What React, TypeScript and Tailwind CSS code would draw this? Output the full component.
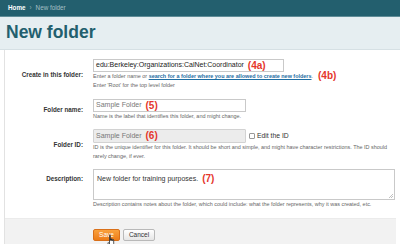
import React from "react";

const font = { fontFamily: '"Liberation Sans", Arial, sans-serif' };

// Red call-out marker, like the numbers drawn on the screenshot
function Mark({ children }: { children: React.ReactNode }) {
  return (
    <span className="ml-[4px] text-[10px] font-bold leading-none text-[#e5362c]">
      {children}
    </span>
  );
}

function Label({ children, top = false }: { children: React.ReactNode; top?: boolean }) {
  return (
    <div
      className={`w-[79px] shrink-0 pr-[1px] text-right text-[6.3px] font-bold text-[#333] ${
        top ? "pt-[5px]" : "flex items-center justify-end"
      }`}
    >
      {children}
    </div>
  );
}

function Help({ children }: { children: React.ReactNode }) {
  return (
    <div className="flex h-[9px] items-center text-[5.45px] leading-[9px] text-[#666] whitespace-nowrap">
      {children}
    </div>
  );
}

function HandCursor() {
  return (
    <svg
      className="absolute left-[101px] top-[15px]"
      width="12"
      height="14"
      viewBox="0 0 12 14"
    >
      <path
        d="M3.5 1.2c0-.6.9-.6.9 0v5.2h.2V5c0-.6.9-.6.9 0v1.5h.2V5.5c0-.6.9-.6.9 0v1.2h.2v-.7c0-.6.9-.6.9 0v3.8c0 1.3-.6 2.2-1 2.9H4.3c-.5-.8-1.7-2.3-2.4-3.3-.4-.6.3-1.1.7-.6l.9 1z"
        fill="#fff"
        stroke="#111"
        strokeWidth="0.7"
        strokeLinejoin="round"
      />
    </svg>
  );
}

export default function App() {
  return (
    <div className="h-[244px] w-[400px] overflow-hidden bg-white" style={font}>
      {/* Breadcrumb bar */}
      <div className="flex h-[17px] items-center gap-[4px] border-b border-[#5f8c97] bg-[#235f6e] pl-[8px] text-[6.3px]">
        <span className="font-bold text-white">Home</span>
        <span className="text-[#8fb0b8]">›</span>
        <span className="text-[#a7c0c6]">New folder</span>
      </div>

      {/* Title band */}
      <div className="h-[33px] border-b border-[#d6e0e4] bg-[#e6eef1] pl-[6px] pt-[6px]">
        <h1 className="text-[17.5px] font-bold leading-[18px] text-[#235f6e]">New folder</h1>
      </div>

      {/* Form panel */}
      <div className="mx-[4px] flex flex-col border-l border-[#e2e2e2] pt-[9px]">
        {/* Create in this folder */}
        <div className="flex gap-[9px]">
          <Label>Create in this folder:</Label>
          <div className="flex flex-col">
            <div className="flex h-[13px] w-[191px] items-center border border-[#c9c9c9] px-[2px] text-[7px] text-[#222]">
              edu:Berkeley:Organizations:CalNet:Coordinator
              <Mark>(4a)</Mark>
            </div>
            <Help>
              Enter a folder name or&nbsp;
              <a className="font-bold text-[#1f6ea3] underline">
                search for a folder where you are allowed to create new folders
              </a>
              .<span className="ml-[1px]"><Mark>(4b)</Mark></span>
            </Help>
            <Help>Enter 'Root' for the top level folder</Help>
          </div>
        </div>

        {/* Folder name */}
        <div className="mt-[9px] flex gap-[9px]">
          <Label>Folder name:</Label>
          <div className="flex flex-col">
            <div className="flex h-[13px] w-[153px] items-center border border-[#c9c9c9] px-[2px] text-[7px] text-[#777]">
              Sample Folder
              <Mark>(5)</Mark>
            </div>
            <Help>Name is the label that identifies this folder, and might change.</Help>
          </div>
        </div>

        {/* Folder ID */}
        <div className="mt-[8px] flex gap-[9px]">
          <Label>Folder ID:</Label>
          <div className="flex flex-col">
            <div className="flex items-center">
              <div className="flex h-[14px] w-[153px] items-center rounded-[1px] border border-[#d2d2d2] bg-[#ececec] px-[2px] text-[7px] text-[#777]">
                Sample Folder
                <Mark>(6)</Mark>
              </div>
              <span className="ml-[3px] h-[6px] w-[6px] rounded-[1px] border border-[#999] bg-white" />
              <span className="ml-[2px] text-[6.8px] text-[#333]">Edit the ID</span>
            </div>
            <Help>
              ID is the unique identifier for this folder. It should be short and simple, and might
              have character restrictions. The ID should
            </Help>
            <Help>rarely change, if ever.</Help>
          </div>
        </div>

        {/* Description */}
        <div className="mt-[8px] flex gap-[9px]">
          <Label top>Description:</Label>
          <div className="flex flex-col">
            <div className="relative h-[31px] w-[302px] border border-[#c9c9c9] px-[3px] pt-[4px]">
              <div className="flex items-center text-[7px] text-[#333]">
                New folder for training purposes.
                <Mark>(7)</Mark>
              </div>
              <svg className="absolute bottom-[1px] right-[1px]" width="5" height="5" viewBox="0 0 5 5">
                <path d="M1 5L5 1M3 5L5 3" stroke="#999" strokeWidth="0.6" />
              </svg>
            </div>
            <Help>
              Description contains notes about the folder, which could include: what the folder
              represents, why it was created, etc.
            </Help>
          </div>
        </div>

        {/* Footer with buttons */}
        <div className="relative mt-[9px] flex h-[30px] gap-[3px] border-t border-[#ebebeb] bg-[#f2f2f2] pl-[88px] pt-[10px]">
          <button className="h-[12px] w-[27px] rounded-[2px] border border-[#d9701a] bg-gradient-to-b from-[#f9a13c] to-[#ec7c16] text-[6.5px] text-white">
            Save
          </button>
          <button className="h-[12px] w-[32px] rounded-[2px] border border-[#b9b9b9] bg-gradient-to-b from-white to-[#e6e6e6] text-[6.5px] text-[#333]">
            Cancel
          </button>
          <HandCursor />
        </div>
      </div>
    </div>
  );
}
